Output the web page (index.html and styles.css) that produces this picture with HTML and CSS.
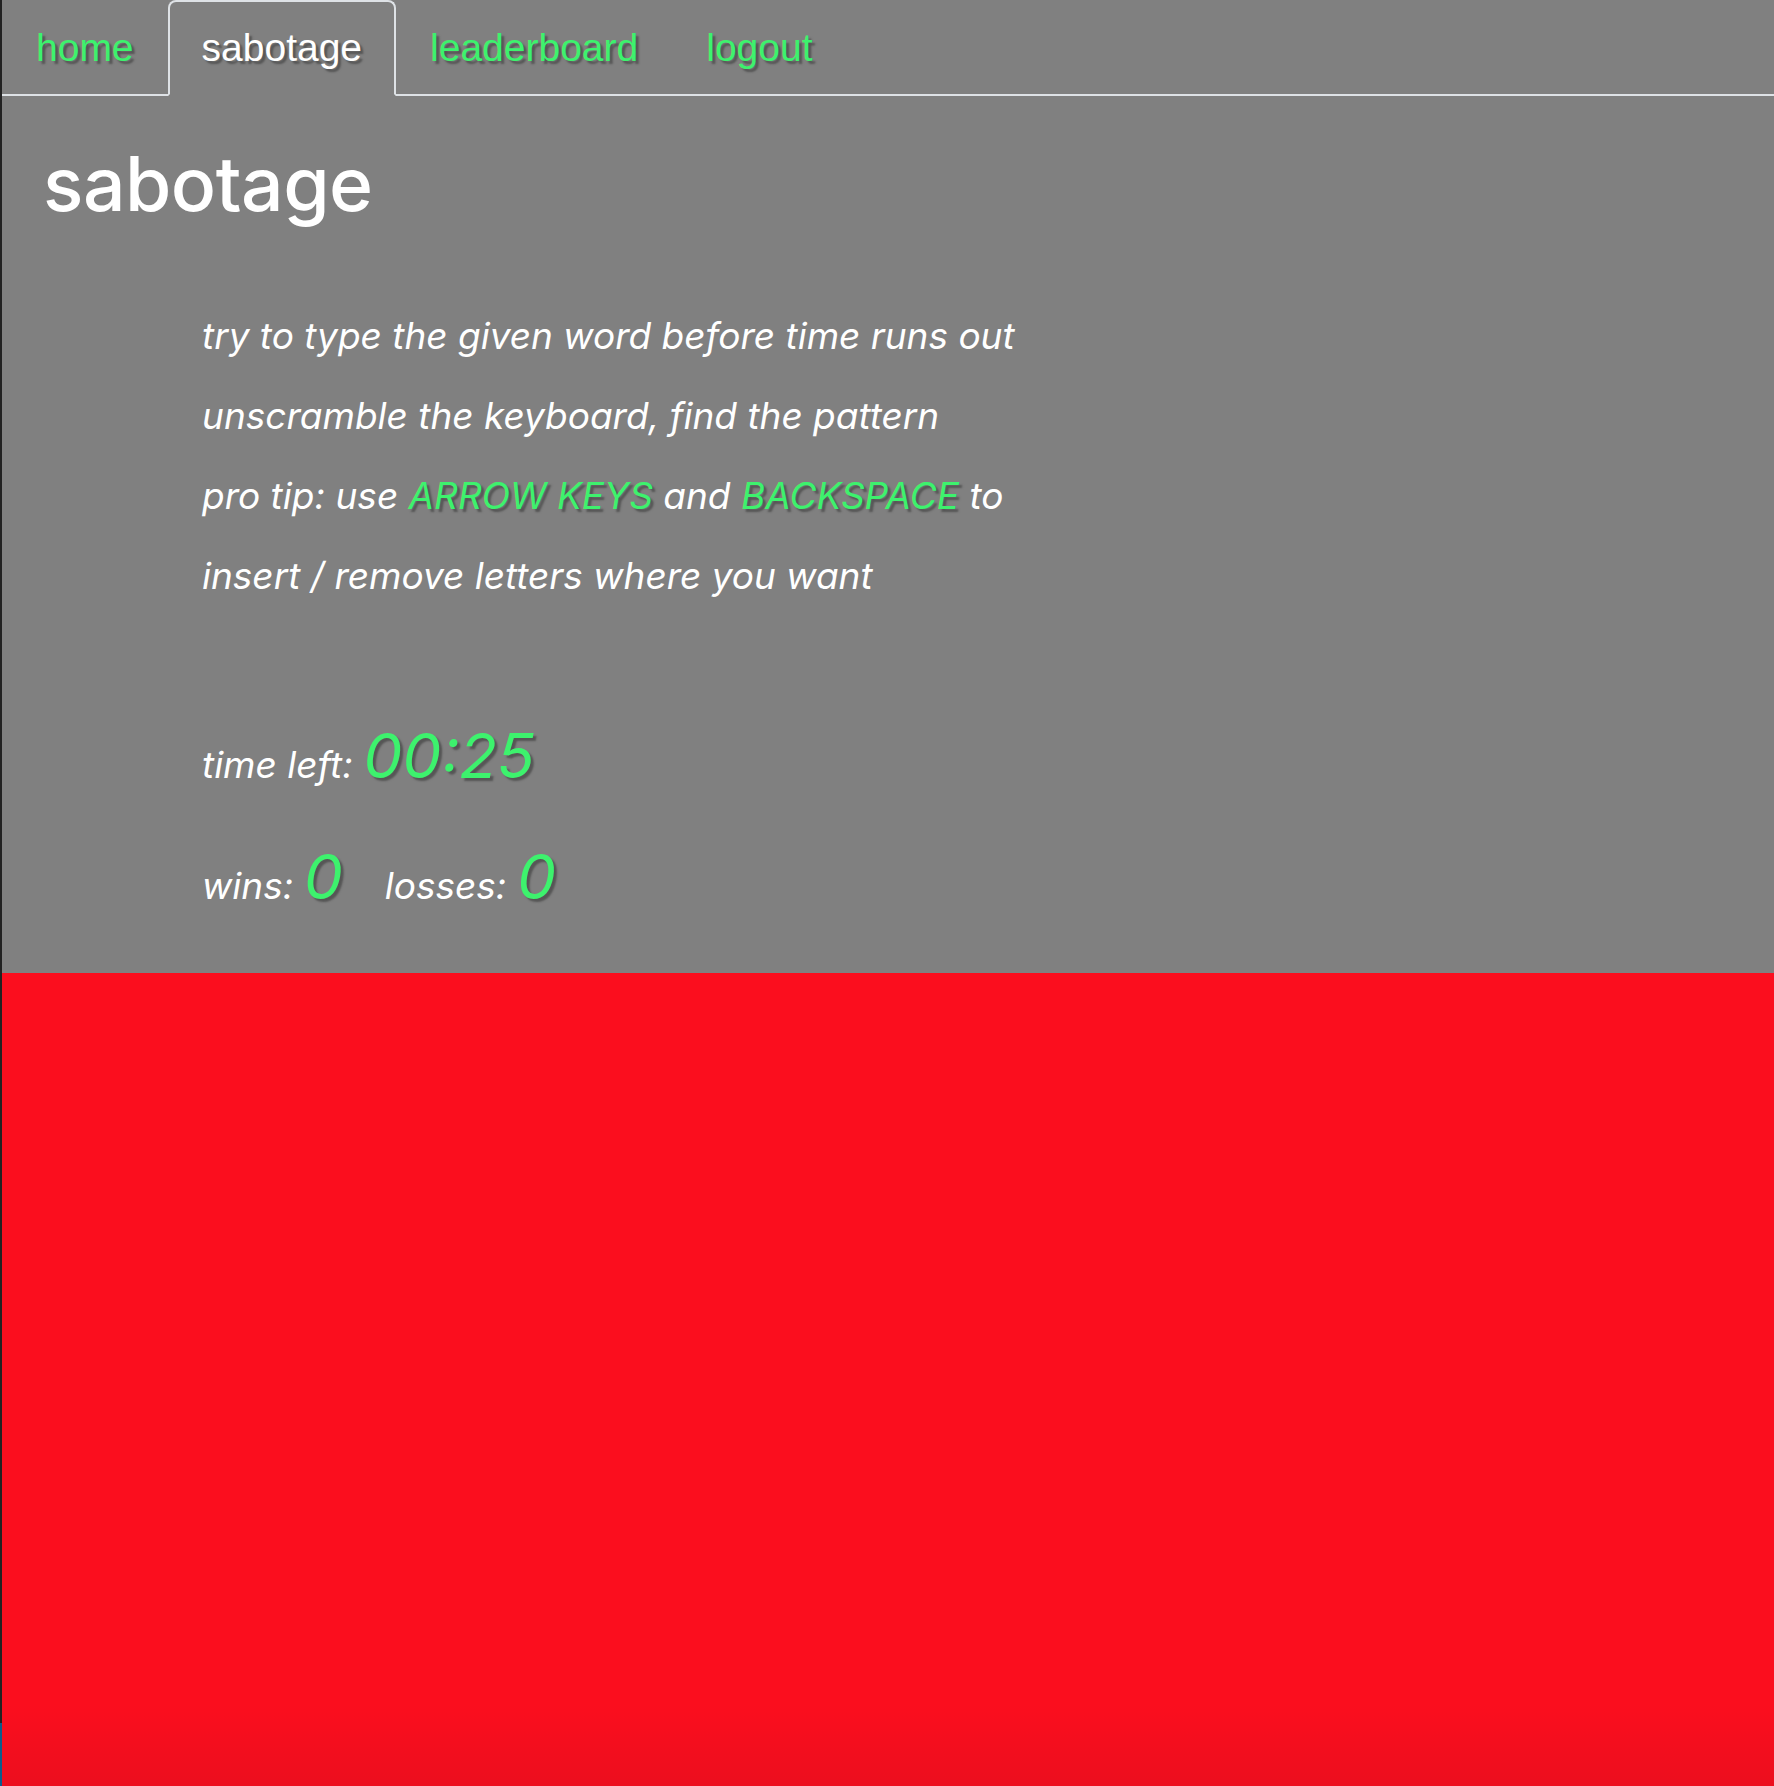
FILE: index.html
```html
<!DOCTYPE html>
<html>
<head>
<meta charset="utf-8">
<title>sabotage</title>
<link rel="stylesheet" href="styles.css">
</head>
<body>
<div class="page">
  <ul class="tabs">
    <li><a class="tab-link">home</a></li>
    <li><a class="tab-link active">sabotage</a></li>
    <li><a class="tab-link">leaderboard</a></li>
    <li><a class="tab-link">logout</a></li>
  </ul>
  <section class="game">
    <h1 class="title">sabotage</h1>
    <div class="info">
      <p class="line">try to type the given word before time runs out</p>
      <p class="line">unscramble the keyboard, find the pattern</p>
      <p class="line">pro tip: use <span class="hl">ARROW KEYS</span> and <span class="hl">BACKSPACE</span> to</p>
      <p class="line">insert / remove letters where you want</p>
      <p class="line timer">time left: <span class="big">00:25</span></p>
      <p class="line score">wins: <span class="big">0</span><span class="gap"></span>losses: <span class="big">0</span></p>
    </div>
  </section>
  <section class="keyboard"></section>
</div>
</body>
</html>
```

FILE: styles.css
```css
html, body {
  margin: 0;
  padding: 0;
  height: 100%;
}
body {
  background: #808080;
  font-family: Inter, "Noto Sans", sans-serif;
  color: #fff;
}
.page {
  min-height: 100%;
  display: flex;
  flex-direction: column;
  border-left: 2px solid #222;
  border-image: linear-gradient(to bottom, #222 0, #222 1722px, #0b5d8c 1722px) 1;
  box-sizing: border-box;
}
.tabs {
  list-style: none;
  margin: 0;
  padding: 0;
  display: flex;
  border-bottom: 2px solid #dee2e6;
}
.tabs li {
  margin-bottom: -2px;
}
.tab-link {
  display: block;
  padding: 16px 32px;
  border: 2px solid transparent;
  border-top-left-radius: 8px;
  border-top-right-radius: 8px;
  font-family: "Liberation Sans", Arial, sans-serif;
  font-size: 39px;
  line-height: 59.6px;
  color: #3df26d;
  text-shadow: 3px 3px 2px #555;
}
.tab-link.active {
  color: #fff;
  border-color: #dee2e6 #dee2e6 #808080;
}
.game {
  padding: 0 0 63px 41px;
}
.title {
  margin: 45px 0 0;
  font-size: 75px;
  font-weight: 500;
  line-height: 86px;
  letter-spacing: -0.5px;
}
.info {
  padding-left: 159px;
  padding-top: 85px;
}
.line {
  margin: 0 0 32px;
  font-size: 37px;
  line-height: 48px;
  font-style: italic;
}
.hl {
  color: #3df26d;
  text-shadow: 3px 3px 2px #555;
}
.timer {
  margin-top: 132px;
  margin-bottom: 64px;
}
.score {
  margin-bottom: 0;
}
.big {
  font-size: 62px;
  color: #3df26d;
  text-shadow: 3px 3px 2px #555;
}
.gap {
  display: inline-block;
  width: 42px;
}
.keyboard {
  flex: 1;
  background: linear-gradient(to bottom, #fb0e1e 0, #fb0e1e 90%, #ec0e1e 100%);
}
```
